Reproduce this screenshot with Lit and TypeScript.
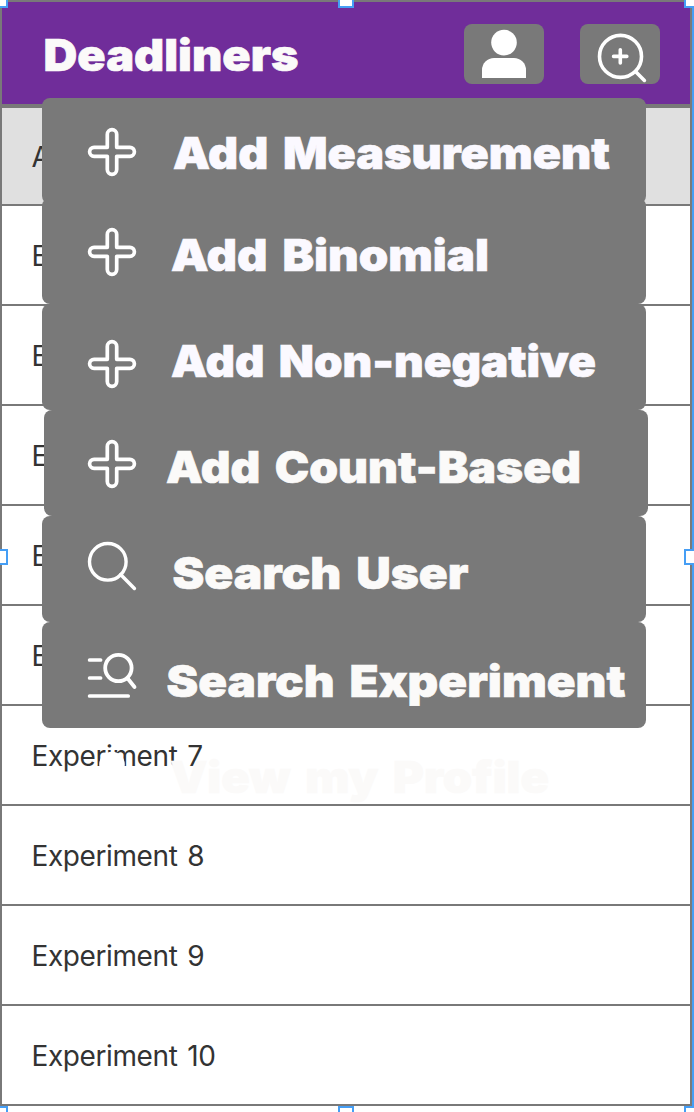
import { LitElement, html, svg, css } from "lit";
import { customElement } from "lit/decorators.js";

type IconName = "plus" | "search" | "search-list" | "user";

interface MenuEntry {
  label: string;
  icon: IconName;
  iconY: number;
  x: number;
  baseline: number;
  width: number;
  kind: string;
}

const MENU: MenuEntry[] = [
  { label: "Add Measurement", icon: "plus", iconY: 30, x: 131, baseline: 71, width: 437, kind: "cool" },
  { label: "Add Binomial", icon: "plus", iconY: 30, x: 129, baseline: 73, width: 318, kind: "cool overlap" },
  { label: "Add Non-negative", icon: "plus", iconY: 36, x: 129, baseline: 73, width: 425, kind: "cool" },
  { label: "Add Count-Based", icon: "plus", iconY: 30, x: 122, baseline: 73, width: 415, kind: "shifted" },
  { label: "Search User", icon: "search", iconY: 26, x: 130.5, baseline: 73, width: 296, kind: "" },
  { label: "Search Experiment", icon: "search-list", iconY: 30, x: 124.5, baseline: 75, width: 459, kind: "" },
  { label: "View my Profile", icon: "user", iconY: 24, x: 128, baseline: 65, width: 379, kind: "ghost" },
];

const ROWS = ["All", ...Array.from({ length: 9 }, (_, i) => `Experiment ${i + 2}`)];

const ICONS = {
  plus: svg`<path d="M19.3 19.3V6.4a4.7 4.7 0 0 1 9.4 0V19.3H41.9a4.5 4.5 0 0 1 0 9H28.7V41.6a4.7 4.7 0 0 1-9.4 0V28.3H6.1a4.5 4.5 0 0 1 0-9Z" stroke-width="3.7" stroke-linejoin="round"/>`,
  search: svg`<circle cx="19.8" cy="19.8" r="18.3" stroke-width="3.4"/><path d="M32.6 32.6L46.4 46.4" stroke-width="3.5"/>`,
  "search-list": svg`<path d="M1.6 8H12.6M1.6 26H12.6M1.6 44H40.2" stroke-width="3.7"/><circle cx="30.4" cy="16" r="13.2" stroke-width="3.8"/><path d="M39.5 26.2L46.5 35" stroke-width="3.8"/>`,
  user: svg`<g fill="#fff" stroke="none"><circle cx="24" cy="12.6" r="12.8"/><path d="M2 48V40A12 12 0 0 1 14 28H34A12 12 0 0 1 46 40V48Z"/></g>`,
};

@customElement("app-root")
export class AppRoot extends LitElement {
  static styles = css`
    :host {
      display: block;
      position: relative;
      width: 694px;
      height: 1112px;
      overflow: hidden;
      background: #fff;
      font-family: Inter, "Liberation Sans", sans-serif;
    }
    .frame {
      box-sizing: border-box;
      width: 692px;
      height: 1106px;
      border: 2px solid #797979;
      background: #fff;
    }
    .header {
      box-sizing: border-box;
      display: flex;
      align-items: center;
      height: 106px;
      padding: 0 30px 0 40px;
      border-bottom: 4px solid #797979;
      background: #702d9a;
    }
    .title {
      flex: none;
      width: 262px;
      height: 102px;
      color: #fbfaf9;
    }
    .actions {
      display: flex;
      gap: 36px;
      margin-left: auto;
      padding-top: 2px;
    }
    .button {
      display: block;
      width: 80px;
      height: 60px;
      padding: 0;
      border: 0;
      border-radius: 8px;
      background: #797979;
    }
    .row {
      box-sizing: border-box;
      display: flex;
      align-items: center;
      height: 100px;
      padding: 2px 0 0 29.5px;
      border-bottom: 2px solid #797979;
      color: #333;
      font-size: 28px;
      font-weight: 400;
      letter-spacing: -0.4px;
      word-spacing: 2.5px;
      white-space: nowrap;
    }
    .row:first-child {
      height: 98px;
      background: #e0e0e0;
    }
    .row:last-child {
      border-bottom: 0;
      height: 98px;
    }
    .menu {
      position: absolute;
      top: 98px;
      left: 42px;
      width: 604px;
      display: flex;
      flex-direction: column;
    }
    .item {
      height: 106px;
      border-radius: 8px;
      background: #797979;
      color: #fbfaf9;
    }
    .cool {
      color: #fbf9ff;
    }
    .overlap {
      margin-top: -6px;
    }
    .shifted {
      margin-left: 2px;
      margin-right: -2px;
    }
    .ghost {
      background: none;
    }
    svg {
      display: block;
      overflow: visible;
    }
    .glyph {
      fill: none;
      stroke: #fff;
      stroke-linecap: round;
    }
    .heavy {
      fill: currentColor;
      stroke: currentColor;
      stroke-width: 0.7px;
      font-family: Inter, "Liberation Sans", sans-serif;
      font-size: 44px;
      font-weight: 900;
      word-spacing: 5px;
    }
    .guide {
      position: absolute;
      left: 692px;
      top: 0;
      width: 2px;
      height: 1106px;
      background: #459ef5;
    }
    .handle {
      box-sizing: border-box;
      position: absolute;
      width: 16px;
      height: 16px;
      border: 2px solid #459ef5;
      background: #fff;
    }
    .l { left: -8px; }
    .c { left: 338px; }
    .r { left: 684px; }
    .t { top: -8px; }
    .m { top: 549px; }
    .b { top: 1106px; }
  `;

  private item(e: MenuEntry) {
    const iconX = e.kind === "shifted" ? 44 : 46;
    return html`<div class="item ${e.kind}">
      <svg width="604" height="106" viewBox="0 0 604 106">
        <g class="glyph" transform="translate(${iconX} ${e.iconY})">${ICONS[e.icon]}</g>
        <text class="heavy" x=${e.x} y=${e.baseline} textLength=${e.width} lengthAdjust="spacingAndGlyphs">${e.label}</text>
      </svg>
    </div>`;
  }

  render() {
    return html`
      <div class="frame">
        <div class="header">
          <svg class="title" viewBox="0 0 262 102">
            <text class="heavy" x="1.5" y="69" textLength="255" lengthAdjust="spacingAndGlyphs">Deadliners</text>
          </svg>
          <div class="actions">
            <button class="button" aria-label="Profile">
              <svg width="80" height="60" viewBox="0 0 80 60">
                <g class="glyph" transform="translate(16 6)">${ICONS.user}</g>
              </svg>
            </button>
            <button class="button" aria-label="Add or search">
              <svg width="80" height="60" viewBox="0 0 80 60">
                <g class="glyph" stroke-width="3.6">
                  <circle cx="40.5" cy="32.4" r="21" />
                  <path d="M33.6 32.4H46.8M40.3 25.8V39" />
                  <path d="M56 48L64.4 56.4" />
                </g>
              </svg>
            </button>
          </div>
        </div>
        <div class="list">${ROWS.map((r) => html`<div class="row">${r}</div>`)}</div>
      </div>
      <div class="menu">${MENU.map((e) => this.item(e))}</div>
      <div class="guide"></div>
      ${["l t", "c t", "r t", "l m", "r m", "l b", "c b", "r b"].map(
        (p) => html`<div class="handle ${p}"></div>`
      )}
    `;
  }
}
